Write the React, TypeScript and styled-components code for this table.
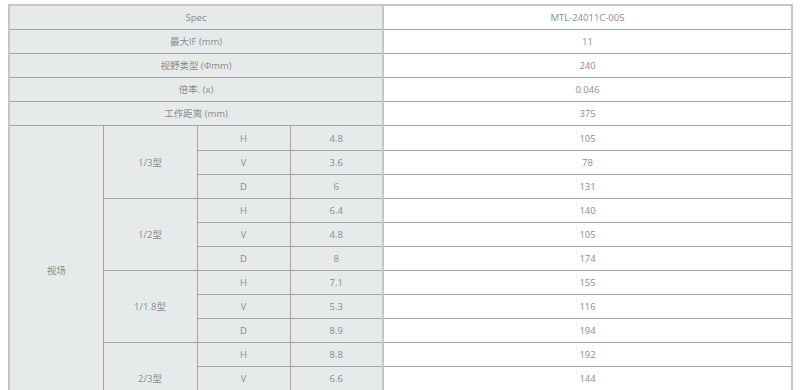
import React from "react";
import styled, { createGlobalStyle } from "styled-components";

const Global = createGlobalStyle`
  html, body { margin: 0; padding: 0; background: #ffffff; }
  body { font-family: "Open Sans", "Noto Sans", "Noto Sans CJK SC", sans-serif; }
`;

const Page = styled.div`
  padding: 4px 7px 0 8px;
`;

const Table = styled.table`
  width: 785px;
  border-collapse: collapse;
  table-layout: fixed;
  border: 2px solid #c4c7c8;
`;

const Cell = styled.td<{ $label?: boolean; $split?: boolean }>`
  height: 23.1px;
  padding: 0;
  text-align: center;
  vertical-align: middle;
  font-size: 9.5px;
  line-height: 13px;
  color: #8c8c8c;
  background: ${(p) => (p.$label ? "#e6eaeb" : "#ffffff")};
  border-top: 1px solid #a4a4a4;
  border-bottom: 1px solid #a4a4a4;
  border-left: 1px solid #a4a4a4;
  border-right: ${(p) => (p.$split ? "2px solid #c4c7c8" : "1px solid #a4a4a4")};
`;

const topRows: [string, string][] = [
  ["Spec", "MTL-24011C-005"],
  ["最大IF (mm)", "11"],
  ["视野类型 (Φmm)", "240"],
  ["倍率. (x)", "0.046"],
  ["工作距离 (mm)", "375"],
];

type Axis = { axis: string; size: string; value: string };
const groups: { name: string; rows: Axis[] }[] = [
  {
    name: "1/3型",
    rows: [
      { axis: "H", size: "4.8", value: "105" },
      { axis: "V", size: "3.6", value: "78" },
      { axis: "D", size: "6", value: "131" },
    ],
  },
  {
    name: "1/2型",
    rows: [
      { axis: "H", size: "6.4", value: "140" },
      { axis: "V", size: "4.8", value: "105" },
      { axis: "D", size: "8", value: "174" },
    ],
  },
  {
    name: "1/1.8型",
    rows: [
      { axis: "H", size: "7.1", value: "155" },
      { axis: "V", size: "5.3", value: "116" },
      { axis: "D", size: "8.9", value: "194" },
    ],
  },
  {
    name: "2/3型",
    rows: [
      { axis: "H", size: "8.8", value: "192" },
      { axis: "V", size: "6.6", value: "144" },
      { axis: "D", size: "11", value: "240" },
    ],
  },
];

export default function App() {
  const total = groups.reduce((n, g) => n + g.rows.length, 0);
  return (
    <>
      <Global />
      <Page>
        <Table>
          <colgroup>
            <col style={{ width: 94 }} />
            <col style={{ width: 94 }} />
            <col style={{ width: 93 }} />
            <col style={{ width: 93 }} />
            <col />
          </colgroup>
          <tbody>
            {topRows.map(([k, v]) => (
              <tr key={k}>
                <Cell $label $split colSpan={4}>
                  {k}
                </Cell>
                <Cell>{v}</Cell>
              </tr>
            ))}
            {groups.map((g, gi) =>
              g.rows.map((r, ri) => (
                <tr key={g.name + r.axis}>
                  {gi === 0 && ri === 0 && (
                    <Cell $label rowSpan={total}>
                      视场
                    </Cell>
                  )}
                  {ri === 0 && (
                    <Cell $label rowSpan={g.rows.length}>
                      {g.name}
                    </Cell>
                  )}
                  <Cell $label>{r.axis}</Cell>
                  <Cell $label $split>
                    {r.size}
                  </Cell>
                  <Cell>{r.value}</Cell>
                </tr>
              ))
            )}
          </tbody>
        </Table>
      </Page>
    </>
  );
}
